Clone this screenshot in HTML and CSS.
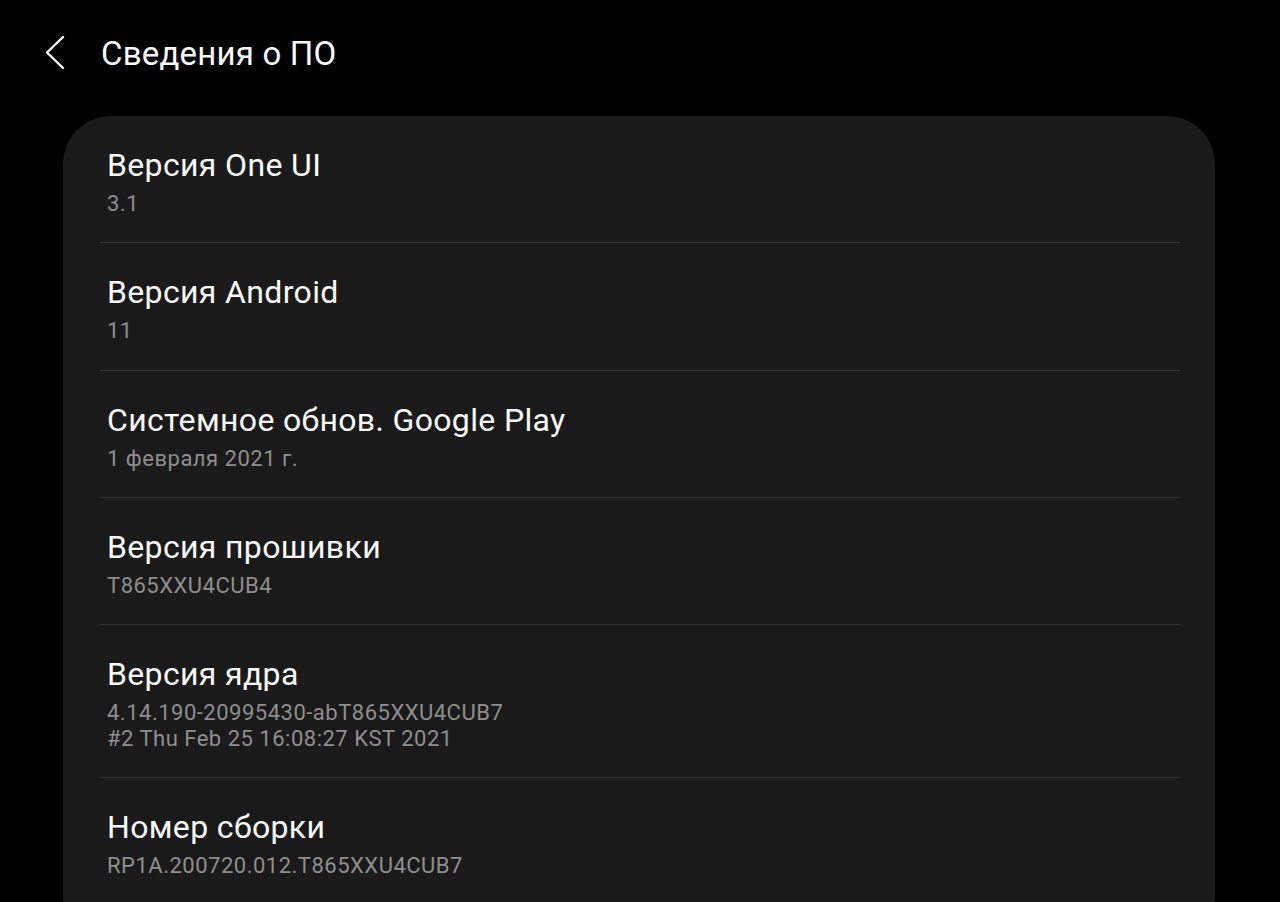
FILE: index.html
```html
<!DOCTYPE html>
<html lang="ru">
<head>
    <meta charset="UTF-8">
    <title>Сведения о ПО</title>
    <link rel="stylesheet" href="styles.css">
</head>
<body>
    <div class="header">
        <svg class="back-icon" width="30" height="40" viewBox="0 0 30 40">
            <path d="M23 5 L7 20.5 L23 36" fill="none" stroke="#fff" stroke-width="2.4" stroke-linecap="round" stroke-linejoin="round"/>
        </svg>
        <h1 class="header-title">Сведения о ПО</h1>
    </div>

    <div class="card">
        <div class="item">
            <div class="item-title">Версия One UI</div>
            <div class="item-value">3.1</div>
        </div>
        <div class="item">
            <div class="item-title">Версия Android</div>
            <div class="item-value">11</div>
        </div>
        <div class="item">
            <div class="item-title">Системное обнов. Google Play</div>
            <div class="item-value">1 февраля 2021 г.</div>
        </div>
        <div class="item">
            <div class="item-title">Версия прошивки</div>
            <div class="item-value">T865XXU4CUB4</div>
        </div>
        <div class="item">
            <div class="item-title">Версия ядра</div>
            <div class="item-value">4.14.190-20995430-abT865XXU4CUB7<br>#2 Thu Feb 25 16:08:27 KST 2021</div>
        </div>
        <div class="item">
            <div class="item-title">Номер сборки</div>
            <div class="item-value">RP1A.200720.012.T865XXU4CUB7</div>
        </div>
    </div>
</body>
</html>
```

FILE: styles.css
```css
body {
    margin: 0;
    background-color: #000;
    font-family: Roboto, "Noto Sans", sans-serif;
    color: #fafafa;
    height: 902px;
    overflow: hidden;
}
.header {
    display: flex;
    align-items: center;
    padding-top: 32px;
    height: 40px;
    margin-bottom: 44px;
}
.back-icon {
    margin-left: 40px;
    flex-shrink: 0;
}
.header-title {
    margin: 3px 0 0 31px;
    font-size: 33px;
    line-height: 38px;
    font-weight: 400;
    letter-spacing: 0.2px;
    color: #fafafa;
}
.card {
    margin: 0 65px 0 63px;
    background-color: #1a1a1a;
    border-radius: 48px;
    padding: 0 35px 40px 37px;
}
.item {
    padding: 30px 0 25.3px 7px;
    border-bottom: 1px solid #363636;
}
.item:last-child {
    border-bottom: none;
}
.item-title {
    font-size: 32px;
    line-height: 38px;
    letter-spacing: 0.35px;
    color: #fafafa;
}
.item-value {
    margin-top: 7px;
    font-size: 22px;
    line-height: 26px;
    letter-spacing: 0.5px;
    color: #8e8e8e;
}
```
